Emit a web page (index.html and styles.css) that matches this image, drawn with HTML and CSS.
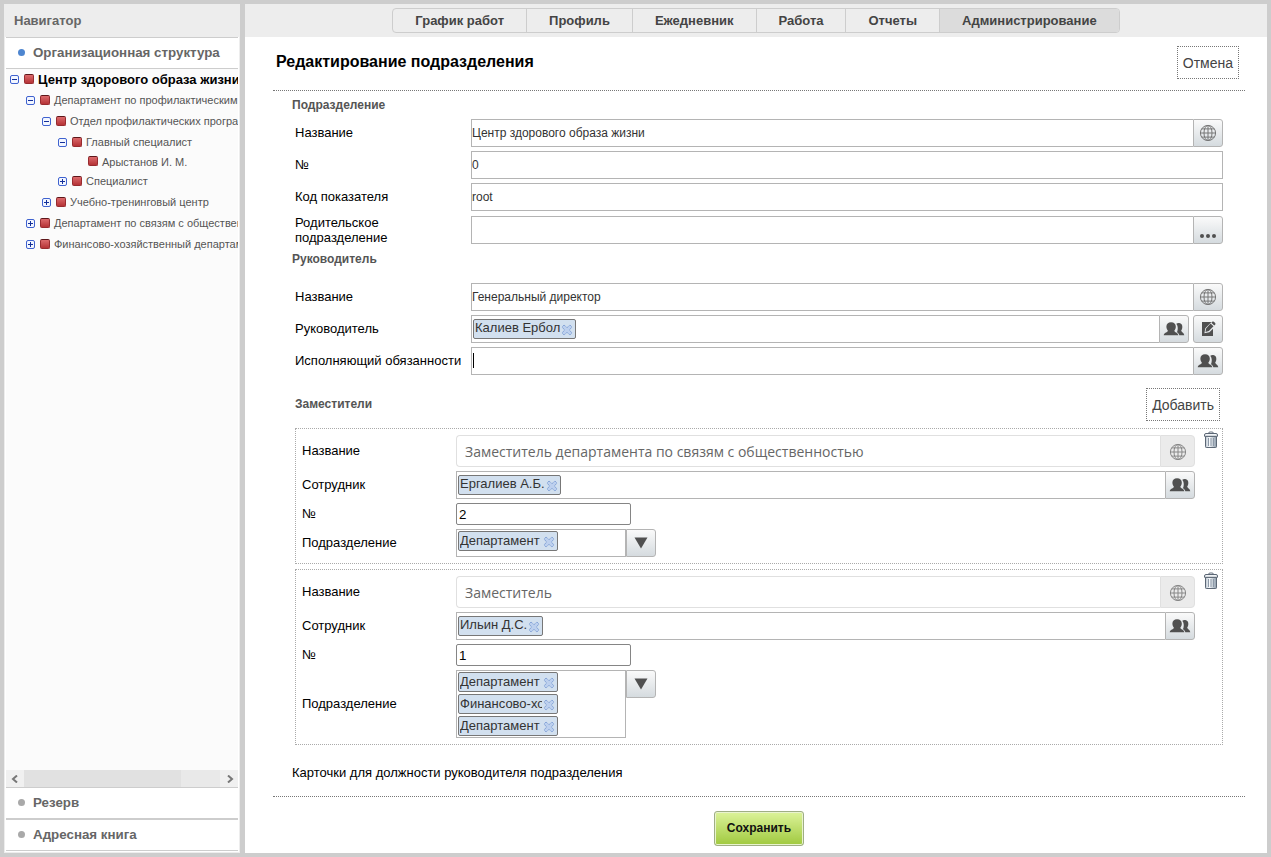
FILE: index.html
```html
<!DOCTYPE html>
<html lang="ru">
<head>
<meta charset="utf-8">
<title>Редактирование подразделения</title>
<link rel="stylesheet" href="styles.css">
</head>
<body>
<svg class="sprite" aria-hidden="true">
  <defs>
    <linearGradient id="bin-fill" x1="0" x2="1" y1="0" y2="0">
      <stop offset="0" stop-color="#b9c4cf"/><stop offset=".35" stop-color="#f8fafc"/><stop offset="1" stop-color="#8e9cab"/>
    </linearGradient>
    <symbol id="globe" viewBox="0 0 18 18">
      <g fill="none" stroke="currentColor" stroke-width="1"><circle cx="9" cy="9" r="7.6"/><ellipse cx="9" cy="9" rx="4" ry="7.6"/><path d="M9 1.4v15.2M1.4 9h15.2M2.7 4.9h12.6M2.7 13.1h12.6"/></g>
    </symbol>
    <symbol id="people" viewBox="0 0 22 16">
      <path fill="currentColor" d="M13.300 2.700c.8-.6 2-.9 3-.7 2 .3 3 1.800 3 3.700 0 1.600-.3 2.800-1.100 3.700.1 1.600 2.700 1.900 3.100 4.900h-5c-.3-1.600-1.200-2.500-2.300-3.100 1-2.600 1.300-6.200-.7-8.500z"/>
      <path fill="currentColor" d="M8.100 1.200c3 0 4.700 1.700 4.700 4.300 0 1.700-.5 3.200-1.500 4.200.2 1.800 3.500 1.500 4 4.600H.7c.5-3.100 4-2.900 4.200-4.600-1-1-1.500-2.500-1.500-4.200 0-2.600 1.700-4.300 4.700-4.300z"/>
    </symbol>
    <symbol id="edit" viewBox="0 0 18 18">
      <path fill="currentColor" d="M3 2h9.500L6.300 8.300 5.400 13.300l5-1.100L14 8.700V16H3z"/>
      <path fill="currentColor" d="M13.300 1.700c.9-.9 3.900 1.700 3 2.700l-1 1-3-2.700zM11.500 3.500l3 2.700-4.700 4.900-3.300.8.600-3.500z"/>
    </symbol>
    <symbol id="bin" viewBox="0 0 14 17">
      <path d="M4.500 2.500Q4.500 1 6 1h2q1.500 0 1.500 1.500" fill="none" stroke="#6a7583"/>
      <path d="M1.500 5.500h11v10.200q0 .8-.8.800H2.300q-.8 0-.8-.8z" fill="url(#bin-fill)" stroke="#5c6775"/>
      <path d="M.5 5.300V4q0-1.500 1.500-1.500h10q1.500 0 1.500 1.500v1.300z" fill="#f2f5f8" stroke="#5c6775"/>
      <path d="M4.500 7v8M7 7v8M9.500 7v8" stroke="#8d99a8" fill="none"/>
    </symbol>
    <symbol id="cross" viewBox="0 0 12 12">
      <path d="M3 1 6 3.700 9 1l2 2-2.700 3L11 9l-2 2-3-2.700L3 11 1 9l2.700-3L1 3z" fill="#bdd0ee" stroke="#86a5d8" stroke-width="1" stroke-linejoin="round" stroke-dasharray="1.600 .4"/>
    </symbol>
    <symbol id="down" viewBox="0 0 14 12"><path d="M.5.5h13L7 11.500z" fill="#505050"/></symbol>
    <symbol id="dots" viewBox="0 0 16 4"><g fill="#505050"><circle cx="2" cy="2" r="2"/><circle cx="8" cy="2" r="2"/><circle cx="14" cy="2" r="2"/></g></symbol>
    <symbol id="minus" viewBox="0 0 9 9"><rect x=".5" y=".5" width="8" height="8" rx="1.500" fill="#f2f6ff" stroke="#3f62cf"/><path d="M2 4.500h5" stroke="#14309a"/></symbol>
    <symbol id="plus" viewBox="0 0 9 9"><rect x=".5" y=".5" width="8" height="8" rx="1.500" fill="#f2f6ff" stroke="#3f62cf"/><path d="M2 4.500h5M4.500 2v5" stroke="#14309a"/></symbol>
    <symbol id="left" viewBox="0 0 7 8"><path d="M6 .5 2 4l4 3.500" fill="none" stroke="#777" stroke-width="2"/></symbol>
    <symbol id="right" viewBox="0 0 7 8"><path d="M1 .5 5 4 1 7.500" fill="none" stroke="#777" stroke-width="2"/></symbol>
  </defs>
</svg>

<div class="app">
  <aside class="sidebar">
    <h2 class="sidebar-title">Навигатор</h2>
    <button type="button" class="section active">Организационная структура</button>
    <ul class="tree">
      <li class="node root"><button type="button" class="toggle" aria-label="Свернуть"><svg><use href="#minus"/></svg></button><i class="unit"></i><span>Центр здорового образа жизни</span></li>
      <li class="node level-1"><button type="button" class="toggle" aria-label="Свернуть"><svg><use href="#minus"/></svg></button><i class="unit"></i><span>Департамент по профилактическим программам</span></li>
      <li class="node level-2"><button type="button" class="toggle" aria-label="Свернуть"><svg><use href="#minus"/></svg></button><i class="unit"></i><span>Отдел профилактических программ</span></li>
      <li class="node level-3"><button type="button" class="toggle" aria-label="Свернуть"><svg><use href="#minus"/></svg></button><i class="unit"></i><span>Главный специалист</span></li>
      <li class="node leaf"><i class="unit"></i><span>Арыстанов И. М.</span></li>
      <li class="node level-3"><button type="button" class="toggle" aria-label="Развернуть"><svg><use href="#plus"/></svg></button><i class="unit"></i><span>Специалист</span></li>
      <li class="node level-2"><button type="button" class="toggle" aria-label="Развернуть"><svg><use href="#plus"/></svg></button><i class="unit"></i><span>Учебно-тренинговый центр</span></li>
      <li class="node level-1"><button type="button" class="toggle" aria-label="Развернуть"><svg><use href="#plus"/></svg></button><i class="unit"></i><span>Департамент по связям с общественностью</span></li>
      <li class="node level-1"><button type="button" class="toggle" aria-label="Развернуть"><svg><use href="#plus"/></svg></button><i class="unit"></i><span>Финансово-хозяйственный департамент</span></li>
    </ul>
    <div class="scrollbar">
      <button type="button" aria-label="Влево"><svg><use href="#left"/></svg></button>
      <div class="track"><div class="thumb"></div></div>
      <button type="button" aria-label="Вправо"><svg><use href="#right"/></svg></button>
    </div>
    <button type="button" class="section reserve">Резерв</button>
    <button type="button" class="section">Адресная книга</button>
  </aside>

  <main class="main">
    <nav class="topbar">
      <div class="tabs">
        <a href="#">График работ</a><a href="#">Профиль</a><a href="#">Ежедневник</a><a href="#">Работа</a><a href="#">Отчеты</a><a href="#" class="current">Администрирование</a>
      </div>
    </nav>

    <form class="content">
      <header class="page-head">
        <h1>Редактирование подразделения</h1>
        <button type="button" class="link-btn">Отмена</button>
      </header>

      <div class="body">
        <h3 class="group-title">Подразделение</h3>
        <div class="rows">
          <div class="row">
            <label for="unit-name">Название</label>
            <div class="control"><input class="text joined" id="unit-name" value="Центр здорового образа жизни"><button type="button" class="addon light" aria-label="Перевод"><svg class="i-globe"><use href="#globe"/></svg></button></div>
          </div>
          <div class="row">
            <label for="unit-num">№</label>
            <div class="control"><input class="text" id="unit-num" value="0"></div>
          </div>
          <div class="row">
            <label for="unit-code">Код показателя</label>
            <div class="control"><input class="text" id="unit-code" value="root"></div>
          </div>
          <div class="row">
            <label for="unit-parent" class="two-line">Родительское<br>подразделение</label>
            <div class="control"><input class="text joined" id="unit-parent" value=""><button type="button" class="addon low" aria-label="Выбрать"><svg class="i-dots"><use href="#dots"/></svg></button></div>
          </div>
        </div>

        <h3 class="group-title head-title">Руководитель</h3>
        <div class="rows">
          <div class="row">
            <label for="head-name">Название</label>
            <div class="control"><input class="text joined" id="head-name" value="Генеральный директор"><button type="button" class="addon light" aria-label="Перевод"><svg class="i-globe"><use href="#globe"/></svg></button></div>
          </div>
          <div class="row">
            <label for="head-user">Руководитель</label>
            <div class="control"><div class="picker joined"><span class="chip"><span>Калиев Ербол</span><button type="button" aria-label="Удалить"><svg><use href="#cross"/></svg></button></span><input id="head-user"></div><button type="button" class="addon" aria-label="Выбрать сотрудника"><svg class="i-people"><use href="#people"/></svg></button><button type="button" class="addon alone" aria-label="Редактировать"><svg class="i-edit"><use href="#edit"/></svg></button></div>
          </div>
          <div class="row">
            <label for="acting">Исполняющий обязанности</label>
            <div class="control"><div class="picker joined"><i class="caret"></i><input id="acting"></div><button type="button" class="addon" aria-label="Выбрать сотрудника"><svg class="i-people"><use href="#people"/></svg></button></div>
          </div>
        </div>

        <div class="deputies-head">
          <h3 class="group-title">Заместители</h3>
          <button type="button" class="link-btn">Добавить</button>
        </div>

        <section class="card">
          <div class="card-rows">
            <div class="row">
              <label for="d1-name">Название</label>
              <div class="control"><input class="muted" id="d1-name" value="Заместитель департамента по связям с общественностью" readonly><button type="button" class="muted-addon" aria-label="Перевод"><svg class="i-globe"><use href="#globe"/></svg></button></div>
            </div>
            <div class="row">
              <label for="d1-user">Сотрудник</label>
              <div class="control"><div class="picker joined"><span class="chip"><span>Ергалиев А.Б.</span><button type="button" aria-label="Удалить"><svg><use href="#cross"/></svg></button></span><input id="d1-user"></div><button type="button" class="addon" aria-label="Выбрать сотрудника"><svg class="i-people"><use href="#people"/></svg></button></div>
            </div>
            <div class="row">
              <label for="d1-num">№</label>
              <div class="control"><input class="number" id="d1-num" value="2"></div>
            </div>
            <div class="row">
              <label for="d1-units">Подразделение</label>
              <div class="control"><div class="multi"><span class="chip fixed"><span>Департамент</span><button type="button" aria-label="Удалить"><svg><use href="#cross"/></svg></button></span></div><button type="button" class="addon" id="d1-units"><svg class="i-down"><use href="#down"/></svg></button></div>
            </div>
          </div>
          <button type="button" class="remove" aria-label="Удалить заместителя"><svg><use href="#bin"/></svg></button>
        </section>

        <section class="card">
          <div class="card-rows">
            <div class="row">
              <label for="d2-name">Название</label>
              <div class="control"><input class="muted" id="d2-name" value="Заместитель" readonly><button type="button" class="muted-addon" aria-label="Перевод"><svg class="i-globe"><use href="#globe"/></svg></button></div>
            </div>
            <div class="row">
              <label for="d2-user">Сотрудник</label>
              <div class="control"><div class="picker joined"><span class="chip"><span>Ильин Д.С.</span><button type="button" aria-label="Удалить"><svg><use href="#cross"/></svg></button></span><input id="d2-user"></div><button type="button" class="addon" aria-label="Выбрать сотрудника"><svg class="i-people"><use href="#people"/></svg></button></div>
            </div>
            <div class="row">
              <label for="d2-num">№</label>
              <div class="control"><input class="number" id="d2-num" value="1"></div>
            </div>
            <div class="row">
              <label for="d2-units">Подразделение</label>
              <div class="control"><div class="multi"><span class="chip fixed"><span>Департамент</span><button type="button" aria-label="Удалить"><svg><use href="#cross"/></svg></button></span><span class="chip fixed"><span>Финансово-хозяйственный</span><button type="button" aria-label="Удалить"><svg><use href="#cross"/></svg></button></span><span class="chip fixed"><span>Департамент</span><button type="button" aria-label="Удалить"><svg><use href="#cross"/></svg></button></span></div><button type="button" class="addon" id="d2-units"><svg class="i-down"><use href="#down"/></svg></button></div>
            </div>
          </div>
          <button type="button" class="remove" aria-label="Удалить заместителя"><svg><use href="#bin"/></svg></button>
        </section>

        <p class="cards-note">Карточки для должности руководителя подразделения</p>
      </div>

      <footer class="page-foot"><button type="submit" class="save">Сохранить</button></footer>
    </form>
  </main>
</div>
</body>
</html>
```
FILE: styles.css
```css
*, *::before, *::after { box-sizing: border-box; }

body {
  margin: 0;
  background: #cdcdcd;
  color: #000;
  font: 13px/15px "Liberation Sans", Arial, sans-serif;
}

h1, h2, h3, p, ul { margin: 0; padding: 0; }
button, input { font-family: inherit; margin: 0; }
button { cursor: pointer; }
svg { display: block; }
.sprite { position: absolute; width: 0; height: 0; }

.app {
  display: grid;
  grid-template-columns: 236px minmax(0, 1fr);
  gap: 5px;
  min-height: 100vh;
  padding: 4px;
}

/* Sidebar */
.sidebar {
  display: flex;
  flex-direction: column;
  background: #fff;
  border: solid #ededed;
  border-width: 0 1px 1px;
  padding: 0 1px 1px;
  min-width: 0;
}
.sidebar-title {
  margin: 0 -1px;
  padding: 9px;
  background: #ededed;
  color: #666;
  font-size: 13px;
  line-height: 15px;
}
.section {
  display: flex;
  align-items: center;
  gap: 8px;
  height: 32px;
  flex: none;
  padding: 0 12px 2px;
  border: solid #cdcdcd;
  border-width: 1px 0;
  background: #fff;
  color: #666;
  font-weight: bold;
  text-align: left;
}
.section::before {
  content: "";
  width: 7px;
  height: 7px;
  border-radius: 50%;
  background: #a9a9a9;
}
.section.active::before { background: #4e86d0; }

.tree {
  flex: 1;
  list-style: none;
  overflow: hidden;
  background: #fbfbfb;
  color: #555;
  font-size: 11px;
}
.node {
  display: flex;
  align-items: center;
  height: 21px;
  padding-left: 4px;
  white-space: nowrap;
}
.root { color: #000; font-size: 13px; font-weight: bold; }
.level-1 { padding-left: 20px; }
.level-2 { padding-left: 36px; }
.level-3 { padding-left: 52px; }
.leaf { height: 18px; padding-left: 82px; }
.toggle {
  flex: none;
  margin-right: 5px;
  padding: 0;
  border: 0;
  background: none;
}
.toggle svg { width: 9px; height: 9px; }
.unit {
  flex: none;
  width: 10px;
  height: 10px;
  margin: 0 4px 2px 0;
  border: 1px solid #982b2f;
  border-top-color: #5d1619;
  border-radius: 2px;
  background: linear-gradient(#dc6a6c, #b53336);
}

.scrollbar { display: flex; height: 17px; background: #ededed; }
.scrollbar button {
  display: grid;
  place-items: center;
  width: 18px;
  padding: 0 2px 0 0;
  border: 0;
  background: #f0f0f0;
}
.scrollbar button:last-child { padding: 0 0 0 2px; }
.scrollbar svg { width: 7px; height: 8px; }
.track { flex: 1; background: #e9e9e9; }
.thumb { width: 80%; height: 100%; background: #e1e1e1; }

/* Main area */
.main {
  display: flex;
  flex-direction: column;
  min-width: 0;
  background: #fff;
}
.topbar {
  display: flex;
  justify-content: center;
  padding: 4px 0;
  background: #ededed;
}
.tabs {
  display: flex;
  border: 1px solid #cdcdcd;
  border-radius: 4px;
  overflow: hidden;
}
.tabs a {
  padding: 4px 22px;
  color: #444;
  font-weight: bold;
  text-decoration: none;
}
.tabs a + a { border-left: 1px solid #cdcdcd; }
.tabs .current { background: #dcdcdc; }

.content { padding: 9px 22px 7px 28px; }
.page-head {
  display: flex;
  justify-content: space-between;
  align-items: center;
  padding: 0 6px 11px 3px;
  border-bottom: 1px dotted #777;
}
.page-head h1 { padding-bottom: 2px; font-size: 16px; line-height: 18px; }
.link-btn {
  height: 33px;
  padding: 0 5px;
  border: 1px dotted #777;
  background: #fff;
  color: #444;
  font-size: 14px;
}

.body { padding: 7px 22px 16px 19px; }
.group-title {
  color: #555;
  font-size: 12px;
  line-height: 15px;
}
.rows {
  display: grid;
  gap: 4px;
  margin-left: 3px;
}
.group-title + .rows { margin-top: 6px; }
.head-title { margin-top: 7px; }
.head-title + .rows { margin-top: 16px; }
.row {
  display: grid;
  grid-template-columns: 176px minmax(0, 1fr);
  align-items: center;
}
.row label { padding-bottom: 2px; }
.row .two-line { padding-bottom: 0; }
.control { display: flex; align-items: flex-start; }

.text, .picker, .multi {
  flex: 1;
  min-width: 0;
  height: 28px;
  border: 1px solid #b4b4b4;
  background: #fff;
}
.text {
  padding: 0;
  color: #333;
  font-size: 12px;
}
.joined { border-right: 0; }
.picker {
  display: flex;
  align-items: center;
  padding: 0 0 1px 1px;
}
.picker input {
  flex: 1;
  min-width: 0;
  height: 20px;
  padding: 0 2px;
  border: 0;
  outline: 0;
  background: none;
}
.caret { width: 1px; height: 15px; background: #000; }

.addon {
  display: grid;
  place-items: center;
  flex: none;
  width: 30px;
  height: 28px;
  padding: 0;
  border: 1px solid #b4b4b4;
  border-radius: 0 3px 3px 0;
  background: linear-gradient(#fafafa, #d5dbdf);
  color: #505050;
}
.light { color: #777; }
.alone { margin-left: 4px; border-radius: 3px; }
.low { align-items: end; padding-bottom: 5px; }
.i-globe { width: 18px; height: 18px; }
.i-people { width: 22px; height: 16px; }
.i-edit { width: 18px; height: 18px; }
.i-down { width: 14px; height: 12px; }
.i-dots { width: 16px; height: 4px; }

.chip {
  display: flex;
  align-items: center;
  flex: none;
  height: 20px;
  padding: 0 2px 0 1px;
  border: 1px solid #777;
  border-radius: 2px;
  background: #d2e0ef;
  color: #333;
  font-size: 13px;
  white-space: nowrap;
}
.chip span { flex: 1; min-width: 0; padding-bottom: 2px; overflow: hidden; }
.chip button {
  flex: none;
  padding: 2px 0 0 1px;
  border: 0;
  background: none;
}
.chip svg { width: 12px; height: 12px; }
.fixed { width: 100px; }

/* Deputies */
.deputies-head {
  display: flex;
  justify-content: space-between;
  align-items: center;
  margin: 13px 3px 7px;
}
.card {
  display: flex;
  align-items: flex-start;
  gap: 9px;
  margin-left: 3px;
  padding: 6px 4px 6px 6px;
  border: 1px dotted #aaa;
}
.card + .card { margin-top: 5px; }
.card-rows { display: grid; flex: 1; gap: 4px; min-width: 0; }
.card .row { grid-template-columns: 154px minmax(0, 1fr); }
.remove {
  margin-top: -4px;
  padding: 0;
  border: 0;
  background: none;
}
.remove svg { width: 14px; height: 17px; }
.muted {
  flex: 1;
  min-width: 0;
  height: 32px;
  padding: 0 8px;
  border: 1px solid #e0e0e0;
  border-right: 0;
  border-radius: 4px 0 0 4px;
  color: #666;
  font-family: "Open Sans", "Noto Sans", sans-serif;
  font-size: 14px;
}
.muted-addon {
  display: grid;
  place-items: center;
  width: 35px;
  height: 32px;
  padding: 2px 0 0;
  border: 1px solid #e0e0e0;
  border-radius: 0 4px 4px 0;
  background: #ebebeb;
  color: #888;
}
.number {
  width: 175px;
  height: 22px;
  padding: 0 2px;
  border: 1px solid #858585;
  border-radius: 2px;
  color: #000;
}
.multi {
  display: grid;
  gap: 2px;
  align-content: start;
  flex: none;
  width: 170px;
  height: auto;
  min-height: 28px;
  padding: 1px;
}

.cards-note { margin-top: 20px; }
.page-foot {
  display: flex;
  justify-content: center;
  padding-top: 14px;
  border-top: 1px dotted #777;
}
.save {
  height: 35px;
  padding: 0 12px 1px;
  border: 1px solid #9fae84;
  border-radius: 3px;
  background: linear-gradient(#dcf39a, #a0c93f);
  box-shadow: inset 0 0 0 1px #e9f3cf;
  color: #111;
  font-size: 12px;
  font-weight: bold;
}
```
